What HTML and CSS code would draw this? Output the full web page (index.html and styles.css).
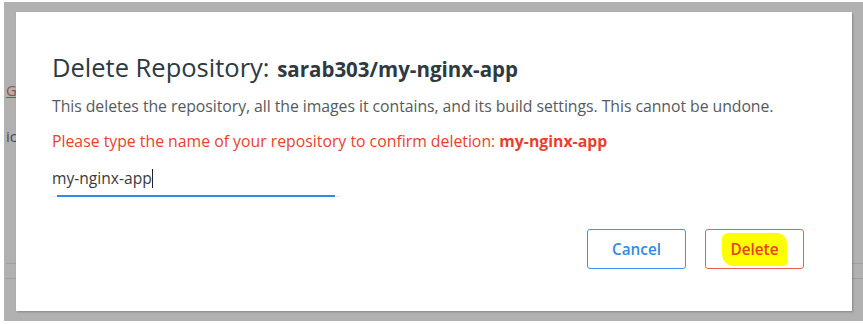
FILE: index.html
```html
<!DOCTYPE html>
<html lang="en">
<head>
    <meta charset="UTF-8">
    <title>Delete Repository</title>
    <link rel="stylesheet" href="styles.css">
</head>
<body>
    <div class="screen">
        <div class="page-behind">
            <a class="behind-link">G</a>
            <span class="behind-text">ic</span>
            <div class="behind-rule rule-top"></div>
            <div class="behind-rule rule-bottom"></div>
        </div>

        <div class="modal">
            <h1 class="modal-title">Delete Repository: <span class="repo-name">sarab303/my-nginx-app</span></h1>
            <p class="modal-text">This deletes the repository, all the images it contains, and its build settings. This cannot be undone.</p>
            <p class="modal-warning">Please type the name of your repository to confirm deletion: <strong>my-nginx-app</strong></p>

            <div class="confirm-field">
                <span class="confirm-value">my-nginx-app</span><span class="caret"></span>
            </div>

            <div class="modal-actions">
                <button class="btn btn-cancel">Cancel</button>
                <button class="btn btn-delete"><span class="marker">Delete</span></button>
            </div>
        </div>
    </div>
</body>
</html>
```

FILE: styles.css
```css
* {
    margin: 0;
    padding: 0;
    box-sizing: border-box;
}

body {
    background: #ffffff;
    font-family: 'Open Sans', 'Liberation Sans', sans-serif;
    padding: 2px 0 0 4px;
}

.screen {
    position: relative;
    height: 319px;
    background-color: #b1b1b1;
    overflow: hidden;
}

.page-behind {
    height: 100%;
    padding: 78px 0 0 2px;
}

.behind-link {
    display: block;
    color: #9c4d4d;
    text-decoration: underline;
    font-size: 15px;
    line-height: 20px;
}

.behind-text {
    display: block;
    margin-top: 26px;
    color: #4a4a4a;
    font-size: 15px;
    line-height: 20px;
}

.behind-rule {
    height: 1px;
    background-color: #a0a0a0;
}

.rule-top {
    margin-top: 117px;
}

.rule-bottom {
    margin-top: 14px;
}

.modal {
    position: absolute;
    top: 10px;
    left: 12px;
    width: 836px;
    height: 299px;
    background: #ffffff;
    box-shadow: 1px 1px 2px rgba(0, 0, 0, 0.25);
    padding: 40px 48px 0 36px;
    display: flex;
    flex-direction: column;
}

.modal-title {
    font-size: 25.5px;
    font-weight: 400;
    color: #2e3942;
    line-height: 30px;
    white-space: nowrap;
}

.repo-name {
    font-size: 20.5px;
    font-weight: 700;
    margin-left: 1px;
}

.modal-text {
    margin-top: 12px;
    font-size: 15.8px;
    line-height: 20px;
    color: #555a60;
    white-space: nowrap;
    letter-spacing: -0.05px;
}

.modal-warning {
    margin-top: 15px;
    font-size: 15.8px;
    line-height: 20px;
    color: #ea3f2b;
    white-space: nowrap;
}

.modal-warning strong {
    font-weight: 700;
}

.confirm-field {
    margin-top: 17px;
    width: 288px;
    height: 29px;
    border-bottom: 1px solid #e4e4e4;
    position: relative;
    font-size: 15.6px;
    line-height: 20px;
    color: #3a3a3a;
    display: flex;
    align-items: flex-start;
}

.confirm-field::after {
    content: "";
    position: absolute;
    left: 5px;
    right: 5px;
    bottom: -1px;
    height: 2px;
    background-color: #2c8be6;
}

.caret {
    display: inline-block;
    width: 1px;
    height: 19px;
    margin-top: 1px;
    background-color: #222;
}

.modal-actions {
    margin-top: 32px;
    display: flex;
    justify-content: flex-end;
    gap: 19px;
}

.btn {
    width: 99px;
    height: 40px;
    background: #ffffff;
    border-radius: 3px;
    font-family: 'Open Sans', 'Liberation Sans', sans-serif;
    font-size: 15.3px;
    font-weight: 600;
    cursor: pointer;
}

.btn-cancel {
    border: 1px solid #3c93f0;
    color: #2f8de6;
}

.btn-delete {
    border: 1px solid #e4604f;
    color: #e8401f;
}

.marker {
    display: inline-block;
    background-color: #ffff00;
    padding: 6px 9px 7px;
    border-radius: 6px 10px 4px 12px;
}
```
